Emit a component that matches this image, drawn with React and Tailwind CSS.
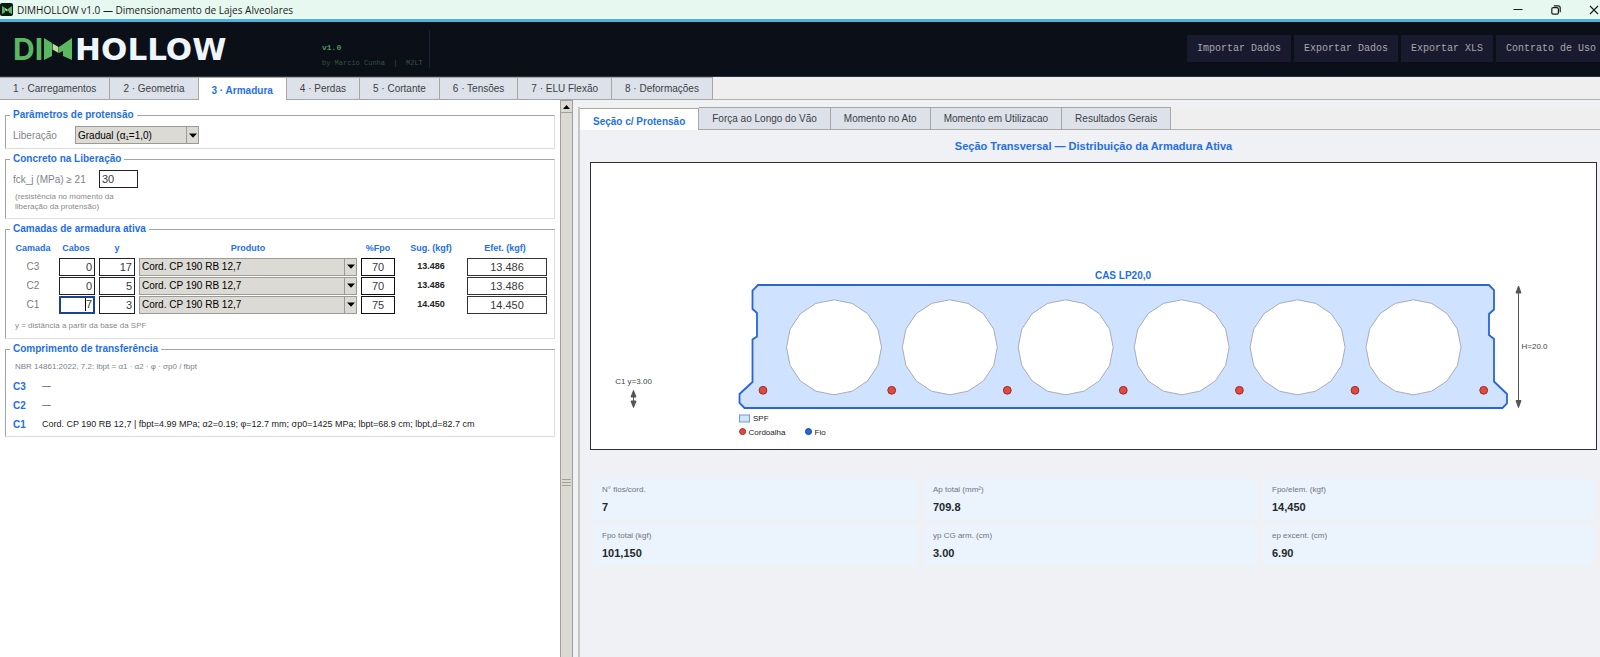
import React from "react";

const mainTabs = [
  "1 · Carregamentos",
  "2 · Geometria",
  "3 · Armadura",
  "4 · Perdas",
  "5 · Cortante",
  "6 · Tensões",
  "7 · ELU Flexão",
  "8 · Deformações",
];

const viewTabs = [
  "Seção c/ Protensão",
  "Força ao Longo do Vão",
  "Momento no Ato",
  "Momento em Utilizacao",
  "Resultados Gerais",
];

const layers = [
  { id: "C3", cabos: "0", y: "17", fpo: "70", sug: "13.486", efet: "13.486" },
  { id: "C2", cabos: "0", y: "5", fpo: "70", sug: "13.486", efet: "13.486" },
  { id: "C1", cabos: "7", y: "3", fpo: "75", sug: "14.450", efet: "14.450", focused: true },
];

const metrics = [
  ["N° fios/cord.", "7"],
  ["Ap total (mm²)", "709.8"],
  ["Fpo/elem. (kgf)", "14,450"],
  ["Fpo total (kgf)", "101,150"],
  ["yp CG arm. (cm)", "3.00"],
  ["ep excent. (cm)", "6.90"],
];

function BrandMark({ className }) {
  return (
    <svg className={className} viewBox="0 0 28 22" aria-hidden="true">
      <path d="M0 0 L8 5 V18 L0 22 Z" fill="#5cb860" />
      <path d="M28 0 L15 9 V15 L19 13 V18 L28 22 Z" fill="#5cb860" />
      <path d="M8.600 5.500 L14.500 9 V15 L8.600 11.500 Z" fill="#b9dc9a" />
    </svg>
  );
}

function TitleBar() {
  return (
    <div className="flex h-[22px] items-center border-b-[3px] border-[#4fb3df] bg-[#e6f8ef]">
      <span className="flex size-[13px] items-center justify-center rounded-xs bg-[#0b1a14]">
        <BrandMark className="h-[8px] w-[10px]" />
      </span>
      <span className="ml-1 font-['Open_Sans',sans-serif] text-[10px] leading-4 text-[#1a1a1a]">
        DIMHOLLOW v1.0 — Dimensionamento de Lajes Alveolares
      </span>
      <div className="ml-auto flex items-center gap-[28px] pr-px text-[#1a1a1a]">
        <button type="button" aria-label="Minimizar">
          <svg className="h-[10px] w-[10px]" viewBox="0 0 10 10" fill="none" stroke="currentColor">
            <path d="M0.5 4.5H9.5" />
          </svg>
        </button>
        <button type="button" aria-label="Restaurar">
          <svg className="h-[10px] w-[10px]" viewBox="0 0 10 10" fill="none" stroke="currentColor" strokeWidth="1.2">
            <rect x="0.8" y="2.6" width="6.6" height="6.6" rx="1.4" />
            <path d="M2.8 0.8H7.2Q9.2 0.8 9.2 2.8V7.2" />
          </svg>
        </button>
        <button type="button" aria-label="Fechar">
          <svg className="h-[10px] w-[10px]" viewBox="0 0 10 10" fill="none" stroke="currentColor" strokeWidth="1.1">
            <path d="M1 1L9 9M9 1L1 9" />
          </svg>
        </button>
      </div>
    </div>
  );
}

function HeaderButton({ children, last }) {
  return (
    <button
      type="button"
      className={
        "h-[27px] bg-[#1a1a2e] pl-[10px] text-[10px] whitespace-nowrap text-[#a6a8b0] " +
        (last ? "pr-1" : "pr-[10px]")
      }
    >
      {children}
    </button>
  );
}

function Header() {
  return (
    <header className="flex h-[55px] items-start justify-between border-b border-[#2a2d45] bg-[#0b0f18] font-['Liberation_Mono',monospace]">
      <div className="flex">
        <div className="flex h-[54px] w-[322px] items-center pl-[13px] text-[31px] leading-none">
          <span className="font-['Inter',sans-serif] text-[30px] font-bold text-[#5cb860]">DI</span>
          <BrandMark className="ml-px h-[22px] w-[28px]" />
          <span className="ml-[3px] font-['DejaVu_Sans',sans-serif] font-bold text-[#eef6fb]">HOLLOW</span>
        </div>
        <div className="mt-2 flex h-[38px] flex-col justify-between border-r border-[#1c2236] pr-[6px] pt-[13px]">
          <span className="text-[8px] leading-[10px] font-bold text-[#4f9a57]">v1.0</span>
          <span className="text-[7px] leading-[9px] whitespace-pre text-[#35533b]">by Marcio Cunha  |  M2LT</span>
        </div>
      </div>
      <nav className="mt-[13px] flex gap-[3px]">
        <HeaderButton>Importar Dados</HeaderButton>
        <HeaderButton>Exportar Dados</HeaderButton>
        <HeaderButton>Exportar XLS</HeaderButton>
        <HeaderButton last>Contrato de Uso</HeaderButton>
      </nav>
    </header>
  );
}

function TabStrip({ tabs, active, selectedTone }) {
  return (
    <div role="tablist" className="flex h-[23px] bg-[#efefef] text-[10px]">
      {tabs.map((tab, i) =>
        i === active ? (
          <button
            key={tab}
            type="button"
            role="tab"
            aria-selected="true"
            className={"border-t border-r border-[#aaa8a0] bg-white px-[13px] pt-[3px] font-bold whitespace-nowrap text-[#1f72e8] " + selectedTone}
          >
            {tab}
          </button>
        ) : (
          <button
            key={tab}
            type="button"
            role="tab"
            aria-selected="false"
            className="border-t border-r border-b border-[#a8a69f] bg-[#dce1ea] px-[13px] whitespace-nowrap text-[#3c3f45]"
          >
            {tab}
          </button>
        )
      )}
      <div className="flex-1 border-b border-[#b4b2aa]" />
    </div>
  );
}

function Group({ title, className, children }) {
  return (
    <fieldset className="min-w-0 border border-t-[#a3a3a3] border-r-[#dedede] border-b-[#dedede] border-l-[#a3a3a3] pr-[5px] pl-[7px]">
      <legend className="-ml-[3px] px-[3px] text-[10px] leading-[14px] font-bold text-[#1f6fe5]">{title}</legend>
      <div className={className}>{children}</div>
    </fieldset>
  );
}

function Combo({ value, options, label, id, className }) {
  return (
    <div className={"relative h-[18px] " + className}>
      <select
        id={id}
        aria-label={label}
        defaultValue={value}
        className="block h-full w-full appearance-none border border-[#9c9a94] bg-[#dcdad5] pr-3 pl-[2px] text-[10px] text-black"
      >
        {options.map((o) => (
          <option key={o}>{o}</option>
        ))}
      </select>
      <span className="pointer-events-none absolute inset-y-px right-px flex w-[12px] items-center justify-center border-l border-[#9c9a94]">
        <svg className="h-[5px] w-[8px]" viewBox="0 0 8 5" aria-hidden="true">
          <path d="M0 0.5H8L4 4.8Z" fill="#000" />
        </svg>
      </span>
    </div>
  );
}

function Field({ value, label, id, className }) {
  return (
    <input
      id={id}
      aria-label={label}
      defaultValue={value}
      className={"block h-[18px] border bg-white px-[2px] text-[11px] text-[#3a3a3a] outline-none " + className}
    />
  );
}

function LayersTable() {
  return (
    <table className="w-full table-fixed border-collapse text-center">
      <thead>
        <tr className="h-4 text-[9px] text-[#1f6fe5]">
          <th className="w-[44px] pr-1 font-bold">Camada</th>
          <th className="w-[40px] pr-[2px] font-bold">Cabos</th>
          <th className="w-[40px] font-bold">y</th>
          <th className="font-bold">Produto</th>
          <th className="w-[38px] font-bold">%Fpo</th>
          <th className="w-[68px] font-bold">Sug. (kgf)</th>
          <th className="w-[84px] pr-1 font-bold">Efet. (kgf)</th>
        </tr>
      </thead>
      <tbody>
        {layers.map((l) => (
          <tr key={l.id} className="h-[19px]">
            <td className="pr-1 text-[10px] text-[#7b7b7b]">{l.id}</td>
            <td className="px-[2px] py-0">
              {l.focused ? (
                <div className="flex h-[18px] items-center justify-end border-2 border-[#17449b] bg-white pr-px">
                  <span className="h-[13px] w-px bg-black" />
                  <input
                    aria-label={"Cabos " + l.id}
                    defaultValue={l.cabos}
                    className="block h-[14px] w-[6px] bg-white text-right text-[11px] text-[#3a3a3a] outline-none"
                  />
                </div>
              ) : (
                <Field label={"Cabos " + l.id} value={l.cabos} className="w-full border-[#222] text-right" />
              )}
            </td>
            <td className="px-[2px] py-0">
              <Field label={"y " + l.id} value={l.y} className="w-full border-[#222] text-right" />
            </td>
            <td className="px-[2px] py-0 text-left">
              <Combo
                label={"Produto " + l.id}
                value="Cord. CP 190 RB 12,7"
                options={["Cord. CP 190 RB 12,7"]}
                className="w-full"
              />
            </td>
            <td className="px-[2px] py-0">
              <Field label={"%Fpo " + l.id} value={l.fpo} className="w-full border-[#111] text-center" />
            </td>
            <td className="text-[9px] font-bold text-[#222]">{l.sug}</td>
            <td className="px-[2px] py-0">
              <Field label={"Efet. " + l.id} value={l.efet} className="w-full border-[#333] text-center" />
            </td>
          </tr>
        ))}
      </tbody>
    </table>
  );
}

function LeftPanel() {
  return (
    <section className="flex w-[35%] flex-col gap-[3px] bg-white pt-2 pr-[5px] pl-[5px]">
      <Group title="Parâmetros de protensão" className="flex items-center py-1">
        <label htmlFor="liberacao" className="w-[62px] text-[10px] text-[#808489]">
          Liberação
        </label>
        <Combo
          id="liberacao"
          value="Gradual (α₁=1,0)"
          options={["Gradual (α₁=1,0)", "Brusca (α₁=1,25)"]}
          className="w-[124px]"
        />
      </Group>

      <Group title="Concreto na Liberação" className="pt-1 pb-[6px]">
        <div className="flex items-center">
          <label htmlFor="fckj" className="w-[86px] text-[10px] text-[#808489]">
            fck_j (MPa) ≥ 21
          </label>
          <Field id="fckj" value="30" className="w-[39px] border-[#222]" />
        </div>
        <p className="mt-1 pl-[2px] text-[8px] leading-[10px] text-[#8a8a8a]">
          (resistência no momento da
          <br />
          liberação da protensão)
        </p>
      </Group>

      <Group title="Camadas de armadura ativa" className="pt-[5px] pb-[7px]">
        <LayersTable />
        <p className="mt-[7px] pl-[2px] text-[8px] leading-[10px] text-[#8a8a8a]">y = distância a partir da base da SPF</p>
      </Group>

      <Group title="Comprimento de transferência" className="pt-[6px] pb-[2px]">
        <p className="mb-[5px] pl-[2px] text-[8px] leading-[10px] text-[#7d838a]">
          NBR 14861:2022, 7.2: lbpt = α1 · α2 · φ · σp0 / fbpt
        </p>
        <dl className="grid grid-cols-[29px_1fr] text-[10px] leading-[19px]">
          <dt className="font-bold text-[#1f6fe5]">C3</dt>
          <dd className="text-[9px] text-[#222]">—</dd>
          <dt className="font-bold text-[#1f6fe5]">C2</dt>
          <dd className="text-[9px] text-[#222]">—</dd>
          <dt className="font-bold text-[#1f6fe5]">C1</dt>
          <dd className="text-[9px] text-[#222]">
            Cord. CP 190 RB 12,7 | fbpt=4.99 MPa; α2=0.19; φ=12.7 mm; σp0=1425 MPa; lbpt=68.9 cm; lbpt,d=82.7 cm
          </dd>
        </dl>
      </Group>
    </section>
  );
}

function ScrollColumn() {
  return (
    <div className="flex w-[13px] flex-col border-x border-[#a19f98] bg-[#dbd9d3]">
      <button
        type="button"
        aria-label="Rolar para cima"
        className="flex h-[13px] items-center justify-center border-y border-[#a19f98] bg-[#dcdad5]"
      >
        <svg className="h-[4px] w-[7px]" viewBox="0 0 7 4" aria-hidden="true">
          <path d="M0 4H7L3.5 0Z" fill="#000" />
        </svg>
      </button>
      <div className="mt-[366px] flex flex-col gap-[2px] px-px">
        <span className="h-px bg-[#a19f98]" />
        <span className="h-px bg-[#a19f98]" />
        <span className="h-px bg-[#a19f98]" />
      </div>
    </div>
  );
}

function corePoints(cx, cy, r) {
  return Array.from({ length: 16 }, (_, i) => {
    const a = (i * Math.PI) / 8;
    return (cx + r * Math.cos(a)).toFixed(1) + "," + (cy + r * Math.sin(a)).toFixed(1);
  }).join(" ");
}

function SectionDrawing() {
  const cores = [834, 949.8, 1065.7, 1181.7, 1297.6, 1413.5];
  const strands = [763, 891.7, 1007.3, 1123.3, 1239.4, 1355, 1483.7];
  return (
    <svg
      className="block w-full font-['Liberation_Sans',sans-serif]"
      viewBox="591 163 1005 286"
      role="img"
      aria-label="Seção transversal CAS LP20,0"
    >
      <text x="1123" y="279" textAnchor="middle" fontSize="10" fontWeight="bold" fill="#1f6fe5">
        CAS LP20,0
      </text>
      <polygon
        points="758,285 1489,285 1494,290 1494,309.5 1489,314 1489,335 1494,339 1494,381.5 1507,394 1507,403.5 1502.5,408 744.5,408 739.5,403 739.5,394 752.5,382 752.5,339.5 757,336.5 757,313 752.5,309 752.5,290.5"
        fill="#cfe2ff"
        stroke="#2a64d8"
        strokeWidth="1.8"
      />
      {cores.map((x) => (
        <polygon key={x} points={corePoints(x, 347.3, 47.5)} fill="#fff" stroke="#a9adb5" strokeWidth="1" />
      ))}
      {strands.map((x) => (
        <circle key={x} cx={x} cy="390.3" r="3.9" fill="#e24a3f" stroke="#9c2c26" strokeWidth="1" />
      ))}
      <g stroke="#555" fill="#555" strokeWidth="1">
        <path d="M1518.5 290V404" />
        <path d="M1518.5 286L1521 293H1516ZM1518.5 407.5L1521 400.5H1516Z" />
        <path d="M633.5 394V404" />
        <path d="M633.5 390.5L636 397H631ZM633.5 407.5L636 401H631Z" />
      </g>
      <g fontSize="8" fill="#444">
        <text x="1521.5" y="349">H=20.0</text>
        <text x="633.5" y="384" textAnchor="middle">C1 y=3.00</text>
      </g>
      <rect x="739.5" y="415" width="10" height="7" fill="#cfe2ff" stroke="#6d9bd8" />
      <circle cx="742.6" cy="431.6" r="3" fill="#e24a3f" stroke="#9c2c26" />
      <circle cx="808.5" cy="431.6" r="3" fill="#1a6ce0" stroke="#12408c" />
      <g fontSize="8" fill="#222">
        <text x="753" y="421">SPF</text>
        <text x="748.5" y="434.5">Cordoalha</text>
        <text x="814.5" y="434.5">Fio</text>
      </g>
    </svg>
  );
}

function RightPanel() {
  return (
    <section className="min-w-0 flex-1 pt-[7px] pl-[5px]">
      <div className="flex h-full flex-col border-l-2 border-[#c8c6c0]">
        <TabStrip tabs={viewTabs} active={0} selectedTone="mt-px" />
        <div className="pr-[3px] pl-[10px]">
          <h2 className="flex h-[32px] items-center justify-center pt-px text-[11px] font-bold text-[#1f6fe5]">
            Seção Transversal — Distribuição da Armadura Ativa
          </h2>
          <div className="border border-[#2f2f33] bg-white">
            <SectionDrawing />
          </div>
          <dl className="mt-[29px] mr-[3px] ml-[3px] grid grid-cols-[325fr_333fr_331fr] gap-x-[6px] gap-y-[5px]">
            {metrics.map(([label, value]) => (
              <div key={label} className="h-[41px] bg-[#ebf3fc] pt-[6px] pl-[9px]">
                <dt className="text-[8px] leading-[10px] text-[#6f757c]">{label}</dt>
                <dd className="mt-[5px] text-[11px] leading-[14px] font-bold text-[#24282d]">{value}</dd>
              </div>
            ))}
          </dl>
        </div>
      </div>
    </section>
  );
}

export default function App() {
  return (
    <div className="flex min-h-screen flex-col overflow-hidden bg-[#f0f1f5] font-['Liberation_Sans',sans-serif]">
      <TitleBar />
      <Header />
      <TabStrip tabs={mainTabs} active={2} selectedTone="" />
      <main className="flex flex-1">
        <LeftPanel />
        <ScrollColumn />
        <RightPanel />
      </main>
    </div>
  );
}
